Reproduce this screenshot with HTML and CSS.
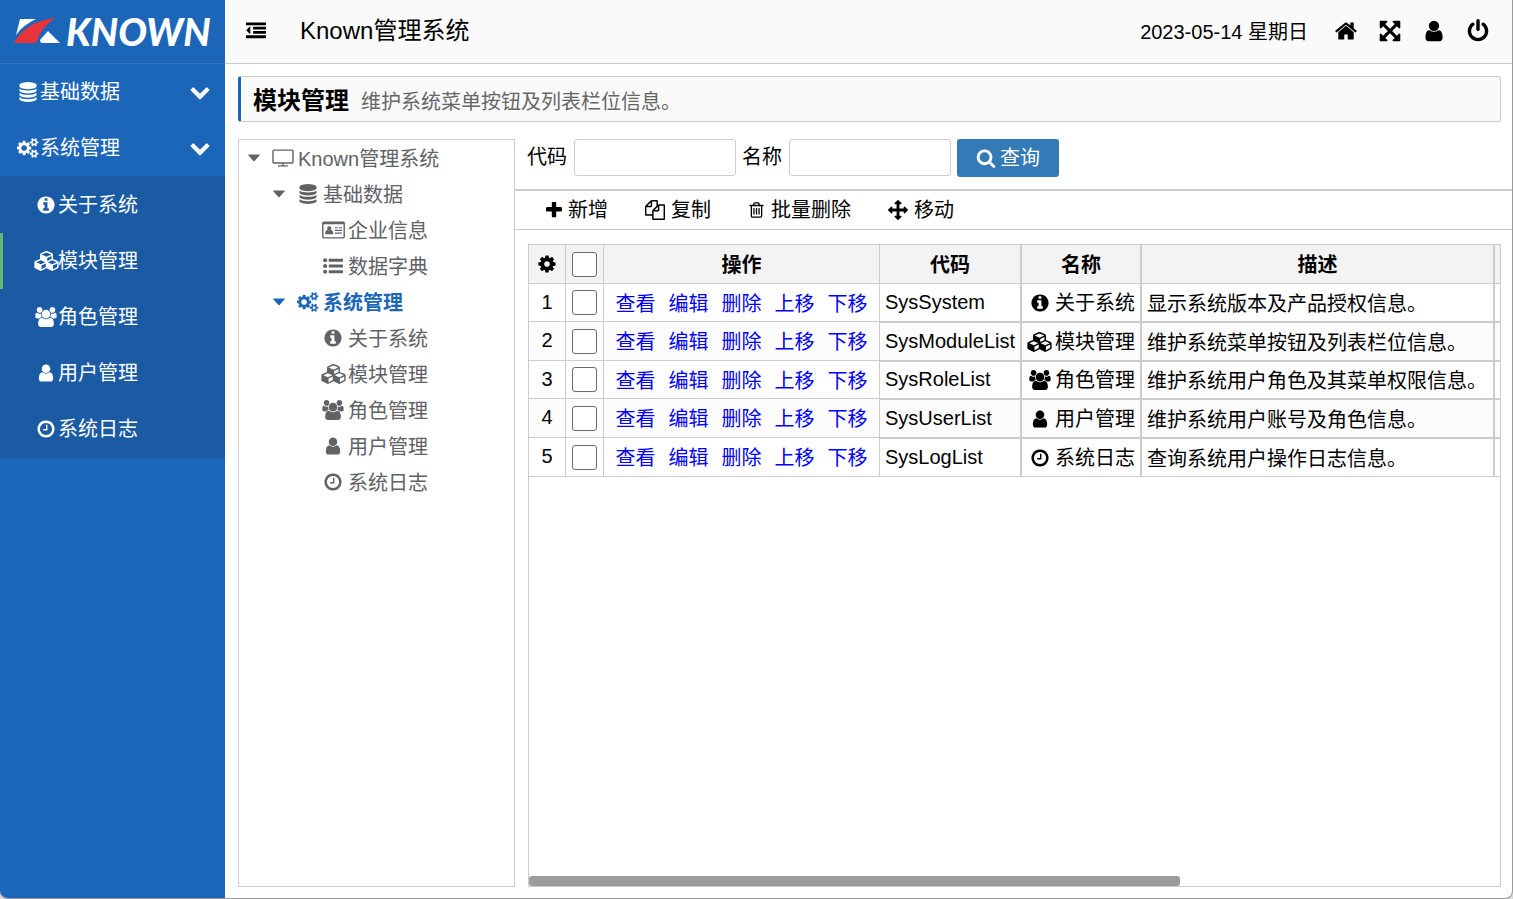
FILE: index.html
```html
<!DOCTYPE html>
<html lang="zh-CN">
<head>
<meta charset="utf-8">
<title>Known管理系统</title>
<link rel="stylesheet" href="styles.css">
</head>
<body>
<svg class="sprite" aria-hidden="true">
  <symbol id="outdent" viewBox="0 0 1792 1792"><path d="M384 544v576q0 13-9.500 22.500t-22.500 9.500q-14 0-23-9l-288-288q-9-9-9-23t9-23l288-288q9-9 23-9 13 0 22.500 9.500t9.500 22.500zM1792 1312v192q0 13-9.500 22.500t-22.500 9.500h-1728q-13 0-22.500-9.500t-9.500-22.500v-192q0-13 9.500-22.500t22.500-9.500h1728q13 0 22.500 9.500t9.500 22.500zm0-384v192q0 13-9.500 22.500t-22.500 9.500h-1088q-13 0-22.500-9.500t-9.500-22.500v-192q0-13 9.500-22.500t22.500-9.500h1088q13 0 22.500 9.500t9.500 22.500zm0-384v192q0 13-9.500 22.500t-22.500 9.500h-1088q-13 0-22.500-9.500t-9.500-22.500v-192q0-13 9.500-22.500t22.500-9.500h1088q13 0 22.500 9.500t9.500 22.500zm0-384v192q0 13-9.500 22.500t-22.500 9.500h-1728q-13 0-22.500-9.500t-9.500-22.500v-192q0-13 9.500-22.500t22.500-9.500h1728q13 0 22.500 9.500t9.500 22.500z"/></symbol>
  <symbol id="database" viewBox="0 0 1792 1792"><path d="M896 768q237 0 443-43t325-127v170q0 69-103 128t-280 93.500-385 34.500-385-34.500-280-93.500-103-128v-170q119 84 325 127t443 43zm0 768q237 0 443-43t325-127v170q0 69-103 128t-280 93.500-385 34.500-385-34.500-280-93.500-103-128v-170q119 84 325 127t443 43zm0-384q237 0 443-43t325-127v170q0 69-103 128t-280 93.500-385 34.500-385-34.500-280-93.500-103-128v-170q119 84 325 127t443 43zm0-1152q208 0 385 34.500t280 93.500 103 128v128q0 69-103 128t-280 93.500-385 34.500-385-34.500-280-93.500-103-128v-128q0-69 103-128t280-93.500 385-34.500z"/></symbol>
  <symbol id="cog" viewBox="0 0 1792 1792"><path d="M1152 896q0-106-75-181t-181-75-181 75-75 181 75 181 181 75 181-75 75-181zm512-109v222q0 12-8 23t-20 13l-185 28q-19 54-39 91 35 50 107 138 10 12 10 25t-9 23q-27 37-99 108t-94 71q-12 0-26-9l-138-108q-44 23-91 38-16 136-29 186-7 28-36 28h-222q-14 0-24.500-8.500t-11.500-21.500l-28-184q-49-16-90-37l-141 107q-10 9-25 9-14 0-25-11-126-114-165-168-7-10-7-23 0-12 8-23 15-21 51-66.500t54-70.500q-27-50-41-99l-183-27q-13-2-21-12.500t-8-23.500v-222q0-12 8-23t19-13l186-28q14-46 39-92-40-57-107-138-10-12-10-24 0-10 9-23 26-36 98.500-107.500t94.500-71.500q13 0 26 10l138 107q44-23 91-38 16-136 29-186 7-28 36-28h222q14 0 24.500 8.500t11.500 21.500l28 184q49 16 90 37l142-107q9-9 24-9 13 0 25 10 129 119 165 170 7 8 7 22 0 12-8 23-15 21-51 66.500t-54 70.500q26 50 41 98l183 28q13 2 21 12.500t8 23.500z"/></symbol>
  <symbol id="cogs" viewBox="0 0 1856 1792"><path d="M832 896q0-106-75-181t-181-75-181 75-75 181 75 181 181 75 181-75 75-181zm768 512q0-52-38-90t-90-38-90 38-38 90q0 53 37.500 90.500t90.500 37.500 90.500-37.500 37.500-90.500zm0-1024q0-52-38-90t-90-38-90 38-38 90q0 53 37.500 90.500t90.500 37.500 90.500-37.500 37.500-90.500zm-384 421v185q0 10-7 19.500t-16 10.500l-155 24q-11 35-32 76 34 48 90 115 7 11 7 20 0 12-7 19-23 30-82.500 89.500t-78.500 59.500q-11 0-21-7l-115-90q-37 19-77 31-11 108-23 155-7 24-30 24h-186q-11 0-20-7.500t-10-17.500l-23-153q-34-10-75-31l-118 89q-7 7-20 7-11 0-21-8-144-133-144-160 0-9 7-19 10-14 41-53t47-61q-23-44-35-82l-152-24q-10-1-17-9.500t-7-19.500v-185q0-10 7-19.500t16-10.500l155-24q11-35 32-76-34-48-90-115-7-11-7-20 0-12 7-20 22-30 82-89t79-59q11 0 21 7l115 90q34-18 77-32 11-108 23-154 7-24 30-24h186q11 0 20 7.500t10 17.500l23 153q34 10 75 31l118-89q8-7 20-7 11 0 21 8 144 133 144 160 0 8-7 19-12 16-42 54t-45 60q23 48 34 82l152 23q10 2 17 10.500t7 19.500zm640 533v140q0 16-149 31-12 27-30 52 51 113 51 138 0 4-4 7-122 71-124 71-8 0-46-47t-52-68q-20 2-30 2t-30-2q-14 21-52 68t-46 47q-2 0-124-71-4-3-4-7 0-25 51-138-18-25-30-52-149-15-149-31v-140q0-16 149-31 13-29 30-52-51-113-51-138 0-4 4-7 4-2 35-20t59-34 30-16q8 0 46 46.500t52 67.500q20-2 30-2t30 2q51-71 92-112l6-2q4 0 124 70 4 3 4 7 0 25-51 138 17 23 30 52 149 15 149 31zm0-1024v140q0 16-149 31-12 27-30 52 51 113 51 138 0 4-4 7-122 71-124 71-8 0-46-47t-52-68q-20 2-30 2t-30-2q-14 21-52 68t-46 47q-2 0-124-71-4-3-4-7 0-25 51-138-18-25-30-52-149-15-149-31v-140q0-16 149-31 13-29 30-52-51-113-51-138 0-4 4-7 4-2 35-20t59-34 30-16q8 0 46 46.500t52 67.500q20-2 30-2t30 2q51-71 92-112l6-2q4 0 124 70 4 3 4 7 0 25-51 138 17 23 30 52 149 15 149 31z"/></symbol>
  <symbol id="info" viewBox="0 0 1792 1792"><path d="M1152 1376v-160q0-14-9-23t-23-9h-96v-512q0-14-9-23t-23-9h-320q-14 0-23 9t-9 23v160q0 14 9 23t23 9h96v320h-96q-14 0-23 9t-9 23v160q0 14 9 23t23 9h448q14 0 23-9t9-23zm-128-896v-160q0-14-9-23t-23-9h-192q-14 0-23 9t-9 23v160q0 14 9 23t23 9h192q14 0 23-9t9-23zm640 416q0 209-103 385.500t-279.500 279.500-385.500 103-385.500-103-279.500-279.500-103-385.500 103-385.500 279.500-279.500 385.500-103 385.500 103 279.500 279.500 103 385.500z"/></symbol>
  <symbol id="cubes" viewBox="0 0 2176 1792"><path d="M640 1632l384-192v-314l-384 164v342zm-64-454l404-173-404-173-404 173zm1088 454l384-192v-314l-384 164v342zm-64-454l404-173-404-173-404 173zm-448-293l384-165v-266l-384 164v267zm-64-379l441-189-441-189-441 189zm1088 518v416q0 36-19 67t-52 47l-448 224q-25 14-57 14t-57-14l-448-224q-5-2-7-4-2 2-7 4l-448 224q-25 14-57 14t-57-14l-448-224q-33-16-52-47t-19-67v-416q0-38 21.500-70t56.500-48l434-186v-400q0-38 21.500-70t56.500-48l448-192q23-10 50-10t50 10l448 192q35 16 56.500 48t21.500 70v400l434 186q36 16 57 48t21 70z"/></symbol>
  <symbol id="users" viewBox="0 0 1920 1792"><path d="M593 896q-162 5-265 128h-134q-82 0-138-40.500t-56-118.500q0-353 124-353 6 0 43.500 21t97.500 42.500 119 21.500q67 0 133-23-5 37-5 66 0 139 81 256zm1071 637q0 120-73 189.500t-194 69.500h-874q-121 0-194-69.500t-73-189.500q0-53 3.500-103.500t14-109 26.500-108.500 43-97.500 62-81 85.500-53.500 111.500-20q10 0 43 21.500t73 48 107 48 135 21.500 135-21.500 107-48 73-48 43-21.500q61 0 111.500 20t85.500 53.500 62 81 43 97.500 26.500 108.500 14 109 3.500 103.500zm-1024-1277q0 106-75 181t-181 75-181-75-75-181 75-181 181-75 181 75 75 181zm704 384q0 159-112.500 271.500t-271.500 112.500-271.500-112.500-112.500-271.500 112.500-271.500 271.500-112.500 271.500 112.500 112.500 271.500zm576 225q0 78-56 118.500t-138 40.500h-134q-103-123-265-128 81-117 81-256 0-29-5-66 66 23 133 23 59 0 119-21.500t97.500-42.500 43.500-21q124 0 124 353zm-128-609q0 106-75 181t-181 75-181-75-75-181 75-181 181-75 181 75 75 181z"/></symbol>
  <symbol id="user" viewBox="0 0 1792 1792"><path d="M1536 1399q0 109-62.500 187t-150.500 78h-854q-88 0-150.500-78t-62.500-187q0-85 8.500-160.500t31.500-152 58.500-131 94-89 134.500-34.500q131 128 313 128t313-128q76 0 134.500 34.500t94 89 58.500 131 31.500 152 8.500 160.500zm-256-887q0 159-112.500 271.500t-271.500 112.500-271.500-112.500-112.500-271.500 112.500-271.500 271.500-112.500 271.500 112.500 112.500 271.500z"/></symbol>
  <symbol id="clock" viewBox="0 0 1792 1792"><path d="M1024 544v448q0 14-9 23t-23 9h-320q-14 0-23-9t-9-23v-64q0-14 9-23t23-9h224v-352q0-14 9-23t23-9h64q14 0 23 9t9 23zm416 352q0-148-73-273t-198-198-273-73-273 73-198 198-73 273 73 273 198 198 273 73 273-73 198-198 73-273zm224 0q0 209-103 385.500t-279.500 279.500-385.500 103-385.500-103-279.500-279.500-103-385.500 103-385.500 279.500-279.500 385.500-103 385.500 103 279.500 279.500 103 385.500z"/></symbol>
  <symbol id="chevron" viewBox="0 0 1792 1792"><path d="M1683 808l-742 741q-19 19-45 19t-45-19l-742-741q-19-19-19-45.500t19-45.500l166-165q19-19 45-19t45 19l531 531 531-531q19-19 45-19t45 19l166 165q19 19 19 45.500t-19 45.500z"/></symbol>
  <symbol id="home" viewBox="0 0 1792 1792"><path d="M1472 992v480q0 26-19 45t-45 19h-384v-384h-256v384h-384q-26 0-45-19t-19-45v-480q0-1 .5-3t.5-3l575-474 575 474q1 2 1 6zm223-69l-62 74q-8 9-21 11h-3q-13 0-21-7l-692-577-692 577q-12 8-24 7-13-2-21-11l-62-74q-8-10-7-23.500t11-21.500l719-599q32-26 76-26t76 26l244 204v-195q0-14 9-23t23-9h192q14 0 23 9t9 23v408l219 182q10 8 11 21.500t-7 23.500z"/></symbol>
  <symbol id="expand" viewBox="0 0 1792 1792"><path d="M1411 541l-355 355 355 355 144-144q29-31 70-14 39 17 39 59v448q0 26-19 45t-45 19h-448q-42 0-59-40-17-39 14-69l144-144-355-355-355 355 144 144q31 30 14 69-17 40-59 40h-448q-26 0-45-19t-19-45v-448q0-42 40-59 39-17 69 14l144 144 355-355-355-355-144 144q-19 19-45 19-12 0-24-5-40-17-40-59v-448q0-26 19-45t45-19h448q42 0 59 40 17 39-14 69l-144 144 355 355 355-355-144-144q-31-30-14-69 17-40 59-40h448q26 0 45 19t19 45v448q0 42-39 59-13 5-25 5-26 0-45-19z"/></symbol>
  <symbol id="power" viewBox="0 0 1792 1792"><path d="M1664 896q0 156-61 298t-164 245-245 164-298 61-298-61-245-164-164-245-61-298q0-182 80.500-343t226.500-270q43-32 95.500-25t83.500 50q32 42 24.500 94.500t-49.500 84.500q-98 74-151.500 181t-53.500 228q0 104 40.500 198.500t109.500 163.500 163.500 109.500 198.500 40.500 198.500-40.500 163.500-109.500 109.500-163.500 40.500-198.500q0-121-53.500-228t-151.500-181q-42-32-49.500-84.500t24.500-94.500q31-43 84-50t95 25q146 109 226.500 270t80.500 343zm-640-768v640q0 52-38 90t-90 38-90-38-38-90v-640q0-52 38-90t90-38 90 38 38 90z"/></symbol>
  <symbol id="tv" viewBox="0 0 1920 1792"><path d="M1792 1248v-960q0-13-9.500-22.500t-22.500-9.500h-1600q-13 0-22.500 9.500t-9.500 22.500v960q0 13 9.500 22.500t22.500 9.500h1600q13 0 22.500-9.500t9.500-22.500zm128-960v960q0 66-47 113t-113 47h-736v128h352q14 0 23 9t9 23v64q0 14-9 23t-23 9h-832q-14 0-23-9t-9-23v-64q0-14 9-23t23-9h352v-128h-736q-66 0-113-47t-47-113v-960q0-66 47-113t113-47h1600q66 0 113 47t47 113z"/></symbol>
  <symbol id="card" viewBox="0 0 2048 1792"><path fill-rule="evenodd" d="M160 128h1728q66 0 113 47t47 113v1216q0 66-47 113t-113 47h-1728q-66 0-113-47t-47-113v-1216q0-66 47-113t113-47zM128 384v1120q0 32 32 32h1728q32 0 32-32v-1120z"/><circle cx="640" cy="740" r="190"/><path d="M500 880q140 110 280 0 130 10 180 150 40 110 40 190 0 60-50 60h-620q-50 0-50-60 0-80 40-190 50-140 180-150zM1152 640h256v110h-256zM1500 640h292v110h-292zM1152 880h640v110h-640zM1152 1120h640v110h-640z"/></symbol>
  <symbol id="list" viewBox="0 0 1792 1792"><circle cx="192" cy="384" r="185"/><circle cx="192" cy="896" r="185"/><circle cx="192" cy="1408" r="185"/><path d="M544 256h1216q32 0 32 32v192q0 32-32 32h-1216q-32 0-32-32v-192q0-32 32-32zM544 768h1216q32 0 32 32v192q0 32-32 32h-1216q-32 0-32-32v-192q0-32 32-32zM544 1280h1216q32 0 32 32v192q0 32-32 32h-1216q-32 0-32-32v-192q0-32 32-32z"/></symbol>
  <symbol id="search" viewBox="0 0 1792 1792"><path d="M1216 832q0-185-131.500-316.500t-316.500-131.500-316.500 131.500-131.500 316.500 131.500 316.500 316.500 131.500 316.500-131.500 131.500-316.500zm512 832q0 52-38 90t-90 38q-54 0-90-38l-343-342q-179 124-399 124-143 0-273.500-55.500t-225-150-150-225-55.500-273.500 55.500-273.500 150-225 225-150 273.500-55.500 273.500 55.500 225 150 150 225 55.500 273.500q0 220-124 399l343 343q37 37 37 90z"/></symbol>
  <symbol id="plus" viewBox="192 192 1408 1408"><path d="M1600 736v192q0 40-28 68t-68 28h-416v416q0 40-28 68t-68 28h-192q-40 0-68-28t-28-68v-416h-416q-40 0-68-28t-28-68v-192q0-40 28-68t68-28h416v-416q0-40 28-68t68-28h192q40 0 68 28t28 68v416h416q40 0 68 28t28 68z"/></symbol>
  <symbol id="copy" viewBox="0 0 1792 1792"><path d="M1696 384q40 0 68 28t28 68v1216q0 40-28 68t-68 28h-960q-40 0-68-28t-28-68v-288h-544q-40 0-68-28t-28-68v-672q0-40 20-88t48-76l408-408q28-28 76-48t88-20h416q40 0 68 28t28 68v328q68-40 128-40h416zm-544 213l-299 299h299v-299zm-640-384l-299 299h299v-299zm196 647l316-316v-416h-384v416q0 40-28 68t-68 28h-416v640h512v-256q0-40 20-88t48-76zm956 804v-1152h-384v416q0 40-28 68t-68 28h-416v640h896z"/></symbol>
  <symbol id="trash" viewBox="192 0 1408 1792"><path d="M704 736v576q0 14-9 23t-23 9h-64q-14 0-23-9t-9-23v-576q0-14 9-23t23-9h64q14 0 23 9t9 23zm256 0v576q0 14-9 23t-23 9h-64q-14 0-23-9t-9-23v-576q0-14 9-23t23-9h64q14 0 23 9t9 23zm256 0v576q0 14-9 23t-23 9h-64q-14 0-23-9t-9-23v-576q0-14 9-23t23-9h64q14 0 23 9t9 23zm128 724v-948h-896v948q0 22 7 40.500t14.500 27 10.500 8.500h832q3 0 10.500-8.500t14.500-27 7-40.500zm-672-1076h448l-48-117q-7-9-17-11h-317q-10 2-17 11zm928 32v64q0 14-9 23t-23 9h-96v948q0 83-47 143.500t-113 60.500h-832q-66 0-113-58.500t-47-141.500v-952h-96q-14 0-23-9t-9-23v-64q0-14 9-23t23-9h309l70-167q15-37 54-63t79-26h320q40 0 79 26t54 63l70 167h309q14 0 23 9t9 23z"/></symbol>
  <symbol id="move" viewBox="0 0 1792 1792"><path d="M1792 896q0 26-19 45l-256 256q-19 19-45 19t-45-19-19-45v-128h-384v384h128q26 0 45 19t19 45-19 45l-256 256q-19 19-45 19t-45-19l-256-256q-19-19-19-45t19-45 45-19h128v-384h-384v128q0 26-19 45t-45 19-45-19l-256-256q-19-19-19-45t19-45l256-256q19-19 45-19t45 19 19 45v128h384v-384h-128q-26 0-45-19t-19-45 19-45l256-256q19-19 45-19t45 19l256 256q19 19 19 45t-19 45-45 19h-128v384h384v-128q0-26 19-45t45-19 45 19l256 256q19 19 19 45z"/></symbol>
  <symbol id="caret" viewBox="0 0 12 8"><path d="M0.500 0.500h11q.6.200.2.800l-5.100 5.600q-.6.500-1.200 0l-5.100-5.600q-.4-.6.200-.8z"/></symbol>
</svg>
<div class="app">
  <aside class="sidebar">
    <div class="logo">
      <svg class="logo-mark" viewBox="0 0 48 28" aria-hidden="true"><path class="mark-white" d="M6 2h16Q9 8 2 18zM26 23l8-9 12 12H27z"/><path class="mark-red" d="M0 26Q12 4 42 1 28 8 22 26z"/></svg>
      <span class="logo-text">KNOWN</span>
    </div>
    <nav>
      <ul class="menu">
        <li><button class="menu-item" type="button"><span class="ico"><svg><use href="#database"/></svg></span>基础数据<svg class="arrow"><use href="#chevron"/></svg></button></li>
        <li><button class="menu-item" type="button"><span class="ico"><svg><use href="#cogs"/></svg></span>系统管理<svg class="arrow"><use href="#chevron"/></svg></button>
          <ul class="submenu">
            <li><a href="#"><span class="ico"><svg><use href="#info"/></svg></span>关于系统</a></li>
            <li><a href="#" class="active"><span class="ico"><svg class="wide"><use href="#cubes"/></svg></span>模块管理</a></li>
            <li><a href="#"><span class="ico"><svg><use href="#users"/></svg></span>角色管理</a></li>
            <li><a href="#"><span class="ico"><svg><use href="#user"/></svg></span>用户管理</a></li>
            <li><a href="#"><span class="ico"><svg><use href="#clock"/></svg></span>系统日志</a></li>
          </ul>
        </li>
      </ul>
    </nav>
  </aside>
  <div class="main">
    <header class="topbar">
      <button type="button" class="toggle" aria-label="收起菜单"><svg><use href="#outdent"/></svg></button>
      <h1>Known管理系统</h1>
      <time datetime="2023-05-14">2023-05-14 星期日</time>
      <div class="tools">
        <button type="button" aria-label="首页"><svg><use href="#home"/></svg></button>
        <button type="button" aria-label="全屏"><svg><use href="#expand"/></svg></button>
        <button type="button" aria-label="用户"><svg><use href="#user"/></svg></button>
        <button type="button" aria-label="退出"><svg><use href="#power"/></svg></button>
      </div>
    </header>
    <main class="page">
      <div class="page-title"><h2>模块管理</h2><p>维护系统菜单按钮及列表栏位信息。</p></div>
      <div class="columns">
        <ul class="tree">
          <li><span class="node"><svg class="caret"><use href="#caret"/></svg><span class="ico"><svg><use href="#tv"/></svg></span>Known管理系统</span>
            <ul>
              <li><span class="node"><svg class="caret"><use href="#caret"/></svg><span class="ico"><svg><use href="#database"/></svg></span>基础数据</span>
                <ul>
                  <li><span class="node leaf"><span class="ico"><svg class="wide"><use href="#card"/></svg></span>企业信息</span></li>
                  <li><span class="node leaf"><span class="ico"><svg><use href="#list"/></svg></span>数据字典</span></li>
                </ul>
              </li>
              <li><span class="node current"><svg class="caret"><use href="#caret"/></svg><span class="ico"><svg><use href="#cogs"/></svg></span>系统管理</span>
                <ul>
                  <li><span class="node leaf"><span class="ico"><svg><use href="#info"/></svg></span>关于系统</span></li>
                  <li><span class="node leaf"><span class="ico"><svg class="wide"><use href="#cubes"/></svg></span>模块管理</span></li>
                  <li><span class="node leaf"><span class="ico"><svg><use href="#users"/></svg></span>角色管理</span></li>
                  <li><span class="node leaf"><span class="ico"><svg><use href="#user"/></svg></span>用户管理</span></li>
                  <li><span class="node leaf"><span class="ico"><svg><use href="#clock"/></svg></span>系统日志</span></li>
                </ul>
              </li>
            </ul>
          </li>
        </ul>
        <section class="content">
          <form class="query">
            <label for="code">代码</label><input id="code" type="text">
            <label for="name">名称</label><input id="name" type="text">
            <button type="button"><svg><use href="#search"/></svg>查询</button>
          </form>
          <div class="toolbar">
            <button type="button"><svg class="plus"><use href="#plus"/></svg>新增</button>
            <button type="button"><svg><use href="#copy"/></svg>复制</button>
            <button type="button"><svg class="trash"><use href="#trash"/></svg>批量删除</button>
            <button type="button"><svg><use href="#move"/></svg>移动</button>
          </div>
          <div class="grid">
            <div class="grid-body">
            <table>
              <colgroup><col class="c-no"><col class="c-check"><col class="c-act"><col class="c-code"><col class="c-name"><col class="c-desc"><col></colgroup>
              <thead><tr><th><svg class="gear"><use href="#cog"/></svg></th><th><input type="checkbox" aria-label="全选"></th><th>操作</th><th>代码</th><th>名称</th><th>描述</th><th></th></tr></thead>
              <tbody>
                <tr><td>1</td><td><input type="checkbox" aria-label="选择第1行"></td><td><div class="acts"><a href="#">查看</a><a href="#">编辑</a><a href="#">删除</a><a href="#">上移</a><a href="#">下移</a></div></td><td>SysSystem</td><td><div class="name"><span class="ico"><svg><use href="#info"/></svg></span>关于系统</div></td><td>显示系统版本及产品授权信息。</td><td></td></tr>
                <tr><td>2</td><td><input type="checkbox" aria-label="选择第2行"></td><td><div class="acts"><a href="#">查看</a><a href="#">编辑</a><a href="#">删除</a><a href="#">上移</a><a href="#">下移</a></div></td><td>SysModuleList</td><td><div class="name"><span class="ico"><svg class="wide"><use href="#cubes"/></svg></span>模块管理</div></td><td>维护系统菜单按钮及列表栏位信息。</td><td></td></tr>
                <tr><td>3</td><td><input type="checkbox" aria-label="选择第3行"></td><td><div class="acts"><a href="#">查看</a><a href="#">编辑</a><a href="#">删除</a><a href="#">上移</a><a href="#">下移</a></div></td><td>SysRoleList</td><td><div class="name"><span class="ico"><svg><use href="#users"/></svg></span>角色管理</div></td><td>维护系统用户角色及其菜单权限信息。</td><td></td></tr>
                <tr><td>4</td><td><input type="checkbox" aria-label="选择第4行"></td><td><div class="acts"><a href="#">查看</a><a href="#">编辑</a><a href="#">删除</a><a href="#">上移</a><a href="#">下移</a></div></td><td>SysUserList</td><td><div class="name"><span class="ico"><svg><use href="#user"/></svg></span>用户管理</div></td><td>维护系统用户账号及角色信息。</td><td></td></tr>
                <tr><td>5</td><td><input type="checkbox" aria-label="选择第5行"></td><td><div class="acts"><a href="#">查看</a><a href="#">编辑</a><a href="#">删除</a><a href="#">上移</a><a href="#">下移</a></div></td><td>SysLogList</td><td><div class="name"><span class="ico"><svg><use href="#clock"/></svg></span>系统日志</div></td><td>查询系统用户操作日志信息。</td><td></td></tr>
              </tbody>
            </table>
            </div>
            <div class="scroll-thumb"></div>
          </div>
        </section>
      </div>
    </main>
  </div>
</div>
</body>
</html>
```
FILE: styles.css
```css
* { box-sizing: border-box; }
html { background: #d8d8d8; }
body { margin: 0; font: 20px/28px "Liberation Sans", "Noto Sans CJK SC", sans-serif; color: #000; }
ul { list-style: none; margin: 0; padding: 0; }
h1, h2, p { margin: 0; }
a { text-decoration: none; }
button, input { font: inherit; color: inherit; }
button { background: none; border: 0; padding: 0; cursor: pointer; }
svg { width: 22px; height: 20px; fill: currentColor; flex: none; display: block; }
svg.wide { width: 25px; }
.sprite { display: none; }
.ico { display: flex; justify-content: center; align-items: center; flex: none; }

.app { display: flex; height: 100vh; border: solid #999; border-width: 0 1px 1px 0; border-radius: 0 0 8px 8px; overflow: hidden; background: #fff; }

.sidebar { width: 225px; flex: none; background: #1c66b9; color: #fff; }
.logo { height: 64px; padding: 0 0 2px 14px; display: flex; align-items: center; gap: 4px; border-bottom: 1px solid #3274c0; }
.logo-mark { width: 48px; height: 28px; }
.mark-white { fill: #fff; }
.mark-red { fill: #e83338; }
.logo-text { font: italic 900 38px/40px Lato, sans-serif; }
.menu-item { width: 100%; height: 56px; padding: 0 14px 0 16px; display: flex; align-items: center; }
.menu-item .ico, .submenu .ico { width: 24px; }
.arrow { width: 22px; height: 21px; margin: 0 0 2px auto; }
.submenu { background: #1a5ba4; padding: 1px 0; }
.submenu a { height: 56px; padding-left: 31px; border-left: 3px solid transparent; display: flex; align-items: center; color: #fff; }
.submenu a.active { border-color: #5fb878; }

.main { flex: 1; min-width: 0; display: flex; flex-direction: column; }
.topbar { height: 64px; flex: none; display: flex; align-items: center; padding: 0 22px 2px 20px; background: #fafafa; border-bottom: 1px solid #ccc; }
.topbar h1 { font-size: 24px; font-weight: normal; margin: 0 auto 0 33px; }
.topbar time { padding-top: 2px; }
.tools { display: flex; gap: 20px; margin-left: 26px; }
.tools svg { width: 24px; height: 24px; }

.page { flex: 1; min-height: 0; display: flex; flex-direction: column; gap: 17px; padding: 12px 0 11px 13px; }
.page-title { display: flex; align-items: center; gap: 12px; height: 46px; flex: none; margin-right: 11px; padding: 4px 0 0 12px; background: #fafafa; border: 1px solid #ccc; border-left: 3px solid #1c66b9; border-radius: 3px; }
.page-title h2 { font-size: 24px; line-height: 32px; }
.page-title p { color: #666; padding-top: 2px; }
.columns { flex: 1; min-height: 0; display: flex; }

.tree { width: 277px; flex: none; border: 1px solid #ccc; padding: 1px 0 0 3px; color: #606266; }
.tree ul { padding-left: 25px; }
.node { display: flex; align-items: center; height: 36px; }
.node .ico { width: 26px; margin: 0 2px 2px 4px; }
.node.leaf { padding-left: 24px; }
.caret { width: 12px; height: 8px; margin: 0 6px 2px; }
.node.current { color: #1c66b9; font-weight: bold; }

.content { flex: 1; min-width: 0; display: flex; flex-direction: column; }
.query { display: flex; align-items: flex-start; height: 52px; padding-left: 12px; border-bottom: 2px solid #ccc; flex: none; }
.query label { line-height: 37px; }
.query input { width: 162px; height: 37px; margin: 0 6px 0 7px; padding: 0 8px; border: 1px solid #ccc; border-radius: 3px; background: #fff; }
.query button { height: 38px; padding: 0 19px; display: flex; align-items: center; gap: 4px; color: #fff; background: #337ab7; border-radius: 3px; }
.query button svg { width: 20px; height: 20px; }
.toolbar { display: flex; align-items: center; gap: 37px; height: 39px; flex: none; padding-left: 31px; border-bottom: 1px solid #ccc; }
.toolbar button { display: flex; align-items: center; gap: 6px; }
.toolbar svg { width: 20px; }
.toolbar .plus { width: 16px; height: 16px; }
.toolbar .trash { width: 17px; height: 18px; }

.grid { flex: 1; min-height: 0; margin: 14px 11px 0 13px; border: 1px solid #ccc; display: flex; flex-direction: column; }
.grid-body { flex: 1; min-height: 0; overflow: hidden; }
.scroll-thumb { width: 67%; height: 10px; flex: none; background: #9c9ca0; border-radius: 3px; }
table { width: 1450px; table-layout: fixed; border-collapse: separate; border-spacing: 0; }
.c-no { width: 37px; }
.c-check { width: 38px; }
.c-act { width: 276px; }
.c-code { width: 141px; }
.c-name { width: 120px; }
.c-desc { width: 353px; }
th, td { height: 38px; padding: 0 5px; border: 0 solid #ccc; border-width: 0 1px 1px 0; text-align: left; white-space: nowrap; }
th { height: 39px; background: #f3f3f3; text-align: center; }
th:nth-child(n+3), td:nth-child(3), td:nth-child(6) { padding-top: 2px; }
tbody tr:nth-child(even) td, tbody tr:last-child td { height: 39px; }
tbody tr:nth-child(even) { background: #fcfcfc; }
th:nth-child(n+5), td:nth-child(n+5) { border-left-width: 1px; }
tr + tr td:nth-child(n+4) { border-top-width: 1px; }
td:nth-child(-n+2) { text-align: center; }
td:nth-child(1), td:nth-child(4) { padding-bottom: 2px; }
.gear { margin: 0 auto; }
input[type="checkbox"] { appearance: none; display: block; width: 25px; height: 25px; margin: 0 auto; border: 1px solid #6b6b6b; border-radius: 3px; background: #fff; }
.acts { display: flex; justify-content: center; gap: 13px; }
.acts a { color: #00f; }
.name { display: flex; align-items: center; gap: 3px; }
.name .ico { width: 25px; }
```
